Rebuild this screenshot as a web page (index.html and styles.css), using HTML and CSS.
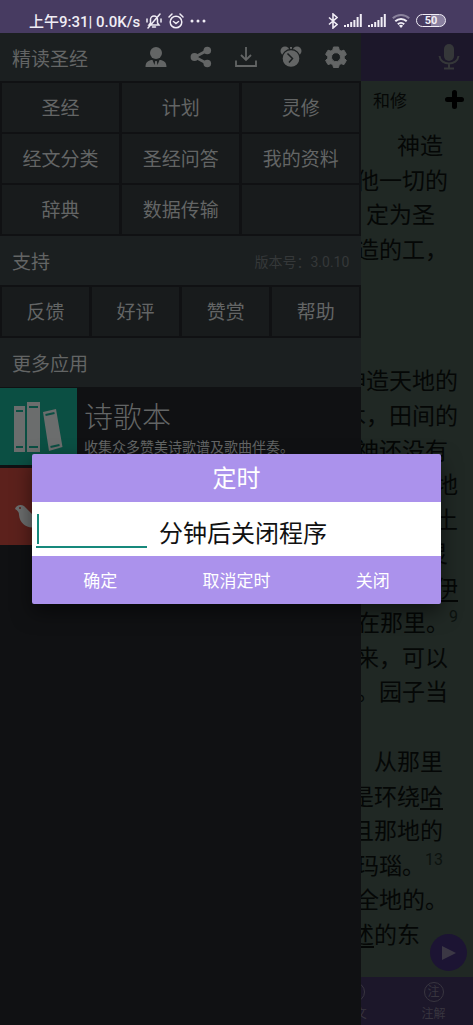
FILE: index.html
```html
<!DOCTYPE html>
<html lang="zh-CN">
<head>
<meta charset="utf-8">
<meta name="viewport" content="width=device-width, initial-scale=1">
<title>精读圣经</title>
<link rel="stylesheet" href="styles.css">
</head>
<body>
<div class="screen">
  <header class="status">
    <div class="status-side">
      <span>上午9:31| 0.0K/s</span>
      <svg width="16" height="16" viewBox="0 0 16 16" fill="none" stroke="currentColor" stroke-width="1.500" stroke-linecap="round"><path d="M3 12h10l-1.500-2V6.500a3.500 3.500 0 0 0-7 0V10zM6.500 14h3M14 1 2 15M1 6v3M15 6v3"/></svg>
      <svg width="16" height="16" viewBox="0 0 16 16" fill="none" stroke="currentColor" stroke-width="1.500" stroke-linecap="round"><circle cx="8" cy="9" r="5.800"/><path d="M1 4l3-3M15 4l-3-3M5.500 8.500 8 10.500l2.500-2"/></svg>
      <svg width="16" height="16" viewBox="0 0 16 16" fill="currentColor"><circle cx="2" cy="8" r="1.500"/><circle cx="8" cy="8" r="1.500"/><circle cx="14" cy="8" r="1.500"/></svg>
    </div>
    <div class="status-side">
      <svg width="10" height="16" viewBox="0 0 10 16" fill="none" stroke="currentColor" stroke-width="1.600"><path d="M1 4.500 9 11.500 5 15V1l4 3.500L1 11.500"/></svg>
      <svg width="18" height="14" viewBox="0 0 18 14" fill="currentColor"><path d="M0 11h2v2H0zM3 10h2v3H3zM6.200 8h2v5h-2zM9.400 6h2v7h-2zM12.600 3h2v10h-2zM15.800 0h2v13h-2z"/></svg>
      <svg width="18" height="14" viewBox="0 0 18 14" fill="currentColor"><path d="M0 11h2v2H0zM3 10h2v3H3zM6.200 8h2v5h-2zM9.400 6h2v7h-2zM12.600 3h2v10h-2zM15.800 0h2v13h-2z"/></svg>
      <svg width="18" height="14" viewBox="0 0 18 14" fill="none" stroke="currentColor" stroke-width="2"><path opacity=".4" d="M.8 4.300a12 12 0 0 1 16.400 0"/><path d="M3.300 7.300a8.300 8.300 0 0 1 11.400 0M5.800 10.200a4.700 4.700 0 0 1 6.400 0"/><path d="M9 14 7 11.800a2.600 2.600 0 0 1 4 0z" fill="currentColor" stroke="none"/></svg>
      <span class="battery">50</span>
    </div>
  </header>

  <main class="reader">
    <div class="toolbar">
      <button class="icon-button" aria-label="语音"><svg width="22" height="28" viewBox="0 0 22 28"><rect x="6" y="1" width="10" height="17" rx="5" fill="currentColor"/><path d="M1.500 13c1 10 18 10 19 0M11 20.500V25M6 25.500h10" fill="none" stroke="currentColor" stroke-width="2"/></svg></button>
    </div>
    <div class="tabs">
      <span>和修</span>
      <button class="icon-button plus" aria-label="添加"><svg width="19" height="19" viewBox="0 0 19 19" fill="none" stroke="currentColor" stroke-width="5" stroke-linecap="round"><path d="M9.500 2.500v14M2.500 9.500h14"/></svg></button>
    </div>
    <article class="text">
      <div class="verse verse-short">
        <p class="end-c">神造</p>
        <p class="end-b">他一切的</p>
        <p class="end-d">定为圣</p>
        <p class="end-b">造的工，</p>
      </div>
      <div class="verse verse-long">
        <p>神造天地的</p>
        <p>木，田间的</p>
        <p class="end-b">神还没有</p>
        <p>地</p>
        <p>土</p>
        <p class="end-b">灵</p>
        <p><u>伊</u></p>
        <p>在那里。<sup>9</sup></p>
        <p class="end-b">来，可以</p>
        <p class="end-b">。园子当</p>
      </div>
      <div class="verse verse-last">
        <p class="end-c">从那里</p>
        <p class="end-c">是环绕<u>哈</u></p>
        <p class="end-c">且那地的</p>
        <p class="end-c">玛瑙。<sup>13</sup></p>
        <p class="end-b">全地的。</p>
        <p class="end-e"><u>述</u>的东</p>
      </div>
    </article>
    <nav class="bottom-nav">
      <a href="#original" class="nav-first"><span class="ring">原</span>原文</a>
      <a href="#notes"><span class="ring">注</span>注解</a>
    </nav>
    <button class="fab" aria-label="播放"><svg width="16" height="16" viewBox="0 0 16 16" fill="currentColor"><path d="M1 1v14l14-7z"/></svg></button>
  </main>

  <aside class="drawer">
    <div class="drawer-head">
      <h1>精读圣经</h1>
      <div class="actions">
        <button class="icon-button" aria-label="用户"><svg width="22" height="22" viewBox="0 0 22 22" fill="currentColor"><circle cx="11" cy="7" r="6"/><path d="M.5 21c0-5 3-7 7-7l2 5 .7-4h1.600l.7 4 2-5c4 0 7 2 7 7z"/></svg></button>
        <button class="icon-button" aria-label="分享"><svg width="22" height="22" viewBox="0 0 22 22" fill="currentColor"><path d="M17 4.500 5 11l12 6.500" fill="none" stroke="currentColor" stroke-width="2.800"/><circle cx="17.300" cy="4.500" r="3.800"/><circle cx="4.500" cy="11" r="3.900"/><circle cx="17.300" cy="17.500" r="3.800"/></svg></button>
        <button class="icon-button" aria-label="下载"><svg width="22" height="22" viewBox="0 0 22 22" fill="none" stroke="currentColor" stroke-width="1.800"><path d="M1 14.500V20h20v-5.500M11 1v13M6 9l5 5 5-5"/></svg></button>
        <button class="icon-button" aria-label="定时"><svg width="22" height="22" viewBox="0 0 22 22" fill="currentColor"><circle cx="5" cy="5" r="4.500"/><circle cx="17" cy="5" r="4.500"/><path d="M11 1v4" stroke="currentColor" stroke-width="2"/><circle cx="11" cy="12.500" r="9" stroke="#1b1f20" stroke-width="1.300"/><path d="m7.500 7.500 5 5-3.500 4" fill="none" stroke="#1b1f20" stroke-width="1.500"/></svg></button>
        <button class="icon-button" aria-label="设置"><svg width="22" height="22" viewBox="0 0 22 22"><path fill="currentColor" stroke="currentColor" stroke-linejoin="round" fill-rule="evenodd" d="M8.500 1h5l.7 3 1.900 1.100 2.900-.9 2.400 4.200-2.200 2.100v1.800l2.200 2.100-2.400 4.200-2.900-.9-1.900 1.100-.7 2.700h-5l-.7-2.700-1.900-1.100-2.900.9L.6 14.400l2.200-2.100v-1.800L.6 8.400 3 4.200l2.900.9L7.800 4zM11 6.700a4.500 4.500 0 1 0 0 9 4.500 4.500 0 0 0 0-9z"/></svg></button>
      </div>
    </div>
    <div class="menu menu-three">
      <button>圣经</button><button>计划</button><button>灵修</button>
      <button>经文分类</button><button>圣经问答</button><button>我的资料</button>
      <button>辞典</button><button>数据传输</button><span class="blank"></span>
    </div>
    <div class="section-bar"><h2>支持</h2><span class="version">版本号：3.0.10</span></div>
    <div class="menu menu-four">
      <button>反馈</button><button>好评</button><button>赞赏</button><button>帮助</button>
    </div>
    <div class="section-bar"><h2>更多应用</h2></div>
    <div class="apps">
      <a class="app" href="#songs">
        <svg class="app-icon songs" viewBox="0 0 77 77"><g fill="#6b6d6d"><path d="M14 18h11v46H14zM27 14h13v50H27zM43 24l13-3 6.500 38L49 63z"/></g><path d="M16 23h7M16 59h7M29 19h9M29 59h9M45.500 27l9-2M50.500 59l9-2" stroke="#0b4f43" stroke-width="2"/></svg>
        <span class="app-info"><strong>诗歌本</strong><span>收集众多赞美诗歌谱及歌曲伴奏。</span></span>
      </a>
      <a class="app" href="#dove" aria-label="灵修应用">
        <svg class="app-icon dove" viewBox="0 0 77 77"><path fill="#6b6d6d" d="M15 41c1-4 6-5 9-3l9 9 20-20c2 14-5 26-14 31-10 4-19-1-20-11 0-3-1-4-4-6z"/><circle cx="20" cy="40" r="1" fill="#5c211c"/></svg>
      </a>
    </div>
  </aside>

  <div class="overlay">
    <form class="dialog" role="dialog" aria-labelledby="dialog-title">
      <h2 id="dialog-title">定时</h2>
      <div class="dialog-body">
        <span class="field"><input id="minutes" type="text" inputmode="numeric"></span>
        <label for="minutes">分钟后关闭程序</label>
      </div>
      <div class="dialog-actions">
        <button type="button">确定</button>
        <button type="button">取消定时</button>
        <button type="button">关闭</button>
      </div>
    </form>
  </div>
</div>
</body>
</html>
```
FILE: styles.css
```css
* { box-sizing: border-box; }
body, h1, h2, p { margin: 0; }
body {
  font-family: Roboto, "Noto Sans CJK SC", sans-serif;
  background: #101113;
}
h1, h2 { font-weight: 400; }
svg { display: block; flex: none; }
button, input {
  font: inherit;
  color: inherit;
  background: none;
  border: 0;
  padding: 0;
}
a { color: inherit; text-decoration: none; }

.screen {
  position: relative;
  min-height: 100vh;
  display: flex;
  flex-direction: column;
  overflow: hidden;
}

/* status bar */
.status {
  height: 33px;
  padding: 8px 27px 0 29px;
  display: flex;
  justify-content: space-between;
  background: #473b61;
  color: #f0edf5;
  font-size: 15px;
  font-weight: 500;
}
.status-side { display: flex; align-items: center; gap: 6px; white-space: nowrap; }
.battery {
  width: 30px;
  height: 13px;
  border: 1px solid #f0edf5;
  border-radius: 7px;
  background: linear-gradient(90deg, transparent 50%, #8a80a0 50%);
  font-size: 11px;
  line-height: 11px;
  font-weight: 700;
  text-align: center;
}

/* reader page */
.reader {
  flex: 1;
  position: relative;
  display: flex;
  flex-direction: column;
  background: #202824;
  color: #050706;
}
.toolbar {
  height: 48px;
  padding: 0 13px;
  display: flex;
  align-items: center;
  justify-content: flex-end;
  background: #1c172a;
  color: #353739;
}
.tabs {
  height: 36px;
  padding: 0 9px;
  display: flex;
  align-items: center;
  justify-content: flex-end;
  gap: 38px;
  font-size: 17px;
}
.plus { color: #000; }
.text {
  flex: 1;
  padding: 13px 15px 24px 0;
  display: flex;
  flex-direction: column;
  font-size: 23px;
  line-height: 34px;
  text-align: right;
}
.verse { display: flex; flex-direction: column; justify-content: space-around; }
.verse-short { flex: 4; margin-bottom: 97px; }
.verse-long { flex: 10; margin-bottom: 35px; }
.verse-last { flex: 6; }
.verse p { white-space: nowrap; }
.end-b { padding-right: 10px; }
.end-c { padding-right: 15px; }
.end-d { padding-right: 23px; }
.end-e { padding-right: 38px; }
.verse u { text-underline-offset: 3px; text-decoration-thickness: 2px; }
.verse sup { font-size: 16px; line-height: 1; color: #0c120f; }

.bottom-nav {
  height: 48px;
  display: grid;
  grid-template-columns: repeat(6, 1fr);
  background: #1c172a;
  color: #38353f;
  font-size: 12px;
  line-height: 18px;
}
.bottom-nav a {
  padding-top: 5px;
  display: flex;
  flex-direction: column;
  align-items: center;
  gap: 3px;
}
.nav-first { grid-column: 5; }
.ring {
  width: 20px;
  height: 20px;
  border: 1px solid currentColor;
  border-radius: 50%;
  text-align: center;
}
.fab {
  position: absolute;
  right: 6px;
  bottom: 54px;
  width: 37px;
  height: 37px;
  border-radius: 50%;
  display: grid;
  place-items: center;
  background: #1c1433;
  color: #3b3744;
}

/* side drawer */
.drawer {
  position: absolute;
  top: 33px;
  bottom: 0;
  left: 0;
  width: 76.4%;
  background: #101113;
  color: #636565;
  font-size: 19px;
}
.drawer h1, .drawer h2 { font-size: 19px; }
.drawer-head, .section-bar {
  padding: 0 12px;
  display: flex;
  align-items: center;
  justify-content: space-between;
  background: #1b1f20;
}
.drawer-head { height: 48px; }
.section-bar { height: 49px; }
.actions { display: flex; gap: 23px; padding-right: 2px; }
.version { font-size: 14px; color: #353839; }
.menu { display: grid; gap: 2px 3px; padding: 2px; grid-auto-rows: 49px; }
.menu-three { grid-template-columns: repeat(3, 1fr); }
.menu-four { grid-template-columns: repeat(4, 1fr); }
.menu > * { background: #181b1c; padding-bottom: 2px; }
.apps { display: grid; gap: 3px; padding-top: 1px; }
.app { display: flex; gap: 7px; }
.app-icon { width: 77px; height: 77px; }
.songs { background: #0b4f43; }
.dove { background: #5c211c; }
.app-info { padding-top: 12px; font-size: 14px; line-height: 22px; white-space: nowrap; }
.app-info strong { display: block; font-size: 29px; line-height: 36px; font-weight: 300; }

/* timer dialog */
.overlay {
  position: absolute;
  top: 33px;
  right: 0;
  bottom: 0;
  left: 0;
  padding: 0 32px;
  display: flex;
  align-items: center;
}
.dialog {
  flex: 1;
  border-radius: 2px;
  overflow: hidden;
  background: #ab92ec;
  color: #fff;
  box-shadow: 0 8px 20px rgba(0, 0, 0, .5);
}
.dialog h2 {
  height: 48px;
  font-size: 24px;
  line-height: 50px;
  text-align: center;
}
.dialog-body {
  height: 54px;
  padding: 8px 4px;
  display: flex;
  align-items: flex-end;
  gap: 12px;
  background: #fff;
  color: #111;
  font-size: 24px;
  line-height: 28px;
}
.field {
  width: 111px;
  padding: 0 1px 2px;
  border-bottom: 2px solid #17897c;
}
.field input {
  display: block;
  width: 100%;
  height: 30px;
  border-left: 2px solid #17897c;
  outline: 0;
}
.dialog-actions {
  height: 48px;
  display: grid;
  grid-template-columns: repeat(3, 1fr);
  font-size: 17px;
}
.dialog-actions button { padding-bottom: 2px; }
```
